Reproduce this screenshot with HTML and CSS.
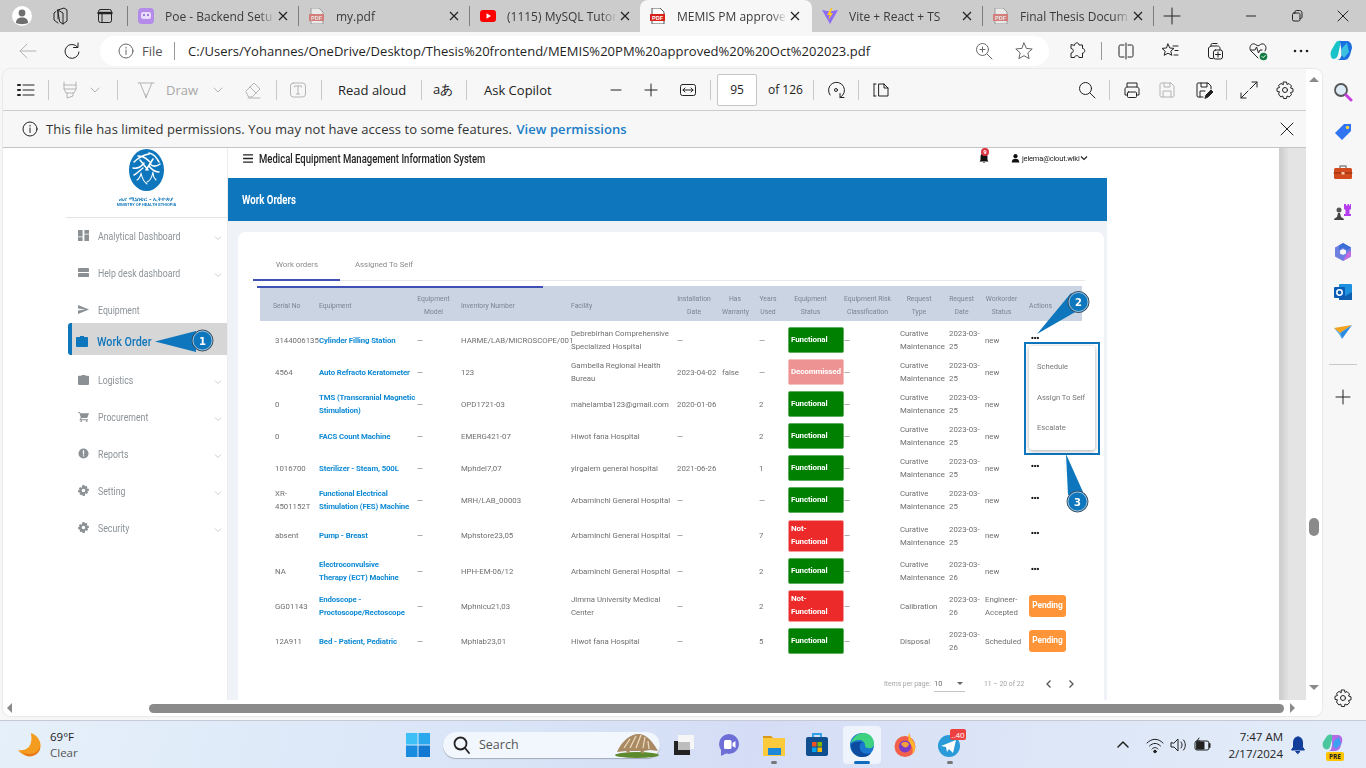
FILE: index.html
```html
<!DOCTYPE html>
<html lang="en">
<head>
<meta charset="utf-8">
<title>MEMIS PM approved</title>
<link rel="stylesheet" href="styles.css">
</head>
<body>
<div class="app">

<div class="tabbar">
  <svg class="i m12" viewBox="0 0 20 20"><circle cx="10" cy="10" r="10" fill="#fff" stroke="none"/><circle cx="10" cy="7" r="3.4" fill="#6f6f6f" stroke="none"/><path d="M4 17c0-4 2.500-5.500 6-5.500s6 1.500 6 5.500c-3 1.500-9 1.500-12 0z" fill="#6f6f6f" stroke="none"/></svg>
  <svg class="i m19" viewBox="0 0 20 20"><path d="M7 4l6-2 3 2v11l-4 3-3-2zM7 4l5 3v11M5 5.500L3 7v7l4 3M7 4v9"/></svg>
  <svg class="i m24" viewBox="0 0 20 20"><rect x="3.500" y="3.500" width="13" height="13" rx="2"/><path d="M3.500 7h13" stroke-width="2.400"/><path d="M7 7v9.500"/></svg>
  <span class="tsep m12"></span>
  <div class="tab"><svg class="fav" viewBox="0 0 16 16"><rect width="16" height="16" rx="4" fill="#b48be8"/><rect x="3" y="4" width="10" height="7" rx="2" fill="#e9dcff"/><path d="M5 7h2M9 7h2" stroke="#8a5fd0" stroke-width="1.500"/></svg><span class="tname">Poe - Backend Setu</span><svg class="x" viewBox="0 0 12 12"><path d="M2 2l8 8M10 2l-8 8"/></svg></div>
  <span class="tsep"></span>
  <div class="tab"><svg class="fav dim" viewBox="0 0 16 16"><path d="M2 0h8l4 4v12H2z" fill="#fff" stroke="#777"/><rect y="6" width="15" height="7" fill="#d9403a"/><text x="7.500" y="12" class="pdftxt">PDF</text></svg><span class="tname">my.pdf</span><svg class="x" viewBox="0 0 12 12"><path d="M2 2l8 8M10 2l-8 8"/></svg></div>
  <span class="tsep"></span>
  <div class="tab"><svg class="fav" viewBox="0 0 16 16"><rect y="2" width="16" height="12" rx="3" fill="#f00"/><path d="M6.500 5.200L11 8l-4.500 2.800z" fill="#fff"/></svg><span class="tname">(1115) MySQL Tutor</span><svg class="x" viewBox="0 0 12 12"><path d="M2 2l8 8M10 2l-8 8"/></svg></div>
  <div class="tab on"><svg class="fav" viewBox="0 0 16 16"><path d="M2 0h8l4 4v12H2z" fill="#fff" stroke="#555"/><rect y="6" width="15" height="7" fill="#d9211b"/><text x="7.500" y="12" class="pdftxt">PDF</text></svg><span class="tname">MEMIS PM approve</span><svg class="x" viewBox="0 0 12 12"><path d="M2 2l8 8M10 2l-8 8"/></svg></div>
  <div class="tab"><svg class="fav" viewBox="0 0 16 16"><path d="M0 2l8 1.500L16 2 8 16z" fill="#8d6cf5"/><path d="M9 0L5 7h2.500L6.500 12 11 5H8.500L10.500 0z" fill="#ffc91f"/></svg><span class="tname">Vite + React + TS</span><svg class="x" viewBox="0 0 12 12"><path d="M2 2l8 8M10 2l-8 8"/></svg></div>
  <span class="tsep"></span>
  <div class="tab"><svg class="fav dim" viewBox="0 0 16 16"><path d="M2 0h8l4 4v12H2z" fill="#fff" stroke="#777"/><rect y="6" width="15" height="7" fill="#d9403a"/><text x="7.500" y="12" class="pdftxt">PDF</text></svg><span class="tname">Final Thesis Docum</span><svg class="x" viewBox="0 0 12 12"><path d="M2 2l8 8M10 2l-8 8"/></svg></div>
  <span class="tsep"></span>
  <svg class="i m8" viewBox="0 0 20 20"><path d="M10 2v16M2 10h16"/></svg>
  <div class="winctl">
    <span class="wbtn"><svg class="i" viewBox="0 0 20 20"><path d="M5.500 10h9"/></svg></span>
    <span class="wbtn"><svg class="i" viewBox="0 0 20 20"><rect x="5.500" y="7" width="7.500" height="8" rx="1.500"/><path d="M8 7V6c0-1 .5-1.500 1.500-1.500h3c1.500 0 2.500 1 2.500 2.500v4c0 1-.5 1.500-2 1.500"/></svg></span>
    <span class="wbtn"><svg class="i" viewBox="0 0 20 20"><path d="M5 5l10 10M15 5L5 15"/></svg></span>
  </div>
</div>

<div class="addr">
  <svg class="i m18 off" viewBox="0 0 20 20"><path d="M18 10H2M9 3l-7 7 7 7"/></svg>
  <svg class="i m24" viewBox="0 0 20 20"><path d="M15.500 6A7 7 0 1 0 17 11M16 2v4.500h-4.500"/></svg>
  <div class="pill m18">
    <svg class="i16 m18 gray" viewBox="0 0 16 16"><circle cx="8" cy="8" r="7"/><path d="M8 7v4.500M8 4.300v.8"/></svg>
    <span class="file m8">File</span>
    <span class="psep m12"></span>
    <span class="url m13">C:/Users/Yohannes/OneDrive/Desktop/Thesis%20frontend/MEMIS%20PM%20approved%20%20Oct%202023.pdf</span>
    <div class="pillend">
      <svg class="i gray" viewBox="0 0 20 20"><circle cx="8.500" cy="8.500" r="6"/><path d="M13 13l5 5M8.500 6v5M6 8.500h5"/></svg>
      <svg class="i gray" viewBox="0 0 20 20"><path d="M10 2l2.400 5.400 5.800.6-4.400 3.900 1.300 5.700L10 14.700l-5.100 2.900 1.300-5.700L1.800 8l5.800-.6z"/></svg>
    </div>
  </div>
  <svg class="i m18" viewBox="0 0 20 20"><path d="M7.500 4c0-3 4.500-3 4.500 0h3.500v3.500c3 0 3 4.500 0 4.500v4.500H12c0-2.500-4.500-2.500-4.500 0H4V12c3 0 3-4.500 0-4.500V4z"/></svg>
  <span class="psep m14"></span>
  <svg class="i m14" viewBox="0 0 20 20"><path d="M10 2v16M8 4H4.500C3.500 4 3 4.500 3 5.500v9c0 1 .5 1.500 1.500 1.500H8M12 4h3.500c1 0 1.500.5 1.500 1.500v9c0 1-.5 1.500-1.500 1.500H12"/></svg>
  <svg class="i m24" viewBox="0 0 20 20"><path d="M8 3l1.800 4 4.200.4-3.200 2.800 1 4.100L8 12.200l-3.800 2.100 1-4.100L2 7.400 6.200 7zM13 5h5M15 9.500h3M14 14h4"/></svg>
  <svg class="i m25" viewBox="0 0 20 20"><path d="M6 5V4c0-1 .5-1.500 1.500-1.500H12M4 6.500l2-1.500h6.500C14 5 15 6 15 7.500V9M3.500 7v8c0 1.500 1 2.500 2.500 2.500h2"/><rect x="8.500" y="9" width="9" height="9" rx="2"/><path d="M13 11v5M10.500 13.500h5"/></svg>
  <svg class="i m23" viewBox="0 0 20 20"><path d="M10 17L3 10C0 6 4 1 7.500 3.500L10 5l2.500-1.500C16 1 20 6 17 10M3 9h4l1.500-3 2 6 1.500-3h2"/><circle cx="15.500" cy="15.500" r="3.800" fill="#107c41" stroke="none"/><path d="M14 15.500l1.200 1.200 2-2.200" stroke="#fff"/></svg>
  <svg class="i m23" viewBox="0 0 20 20"><circle cx="4" cy="10" r="1.300" fill="#222" stroke="none"/><circle cx="10" cy="10" r="1.300" fill="#222" stroke="none"/><circle cx="16" cy="10" r="1.300" fill="#222" stroke="none"/></svg>
  <svg class="i24 m19" viewBox="0 0 24 24"><path d="M5 5c1-3 4-4 6-3l-3 14c-1 3-3 4-5 4-2-1-3-4-2-8z" fill="#17c3c9"/><path d="M10 2h7c3 0 5 3 5 7l-2 7c-1 3-3 5-6 5H7c3 0 4-3 5-6z" fill="#1a6fe0"/><path d="M12 9l5-5 2 9-5 6-3-4z" fill="#3bc2e0"/></svg>
</div>

<div class="body">
  <div class="viewer">
    <div class="docpane">
      <div class="pdfbar">
        <svg class="i m13" viewBox="0 0 20 20"><path d="M7 5h11M7 10h11M7 15h11"/><path d="M2 5h2M2 10h2M2 15h2" stroke-width="2"/></svg>
        <span class="bsep m12"></span>
        <svg class="i m11 off" viewBox="0 0 20 20"><path d="M4 2v7h12V2M4 9l2 4h8l2-4M7 13v5l6-2v-3M4 5h12"/></svg>
        <svg class="i16 m7 off" viewBox="0 0 16 16"><path d="M4 6l4 4 4-4"/></svg>
        <span class="bsep m14"></span>
        <svg class="i m18 off" viewBox="0 0 20 20"><path d="M2 3h16M4 3l5 12h2l5-12M9 15l1 3 1-3"/></svg>
        <span class="lbl off w32 m10">Draw</span>
        <svg class="i16 m12 off" viewBox="0 0 16 16"><path d="M4 6l4 4 4-4"/></svg>
        <svg class="i m17 off" viewBox="0 0 20 20"><path d="M3 11l8-8 6 6-8 8H6zM7 7l6 6M5 18h12"/></svg>
        <span class="bsep m13"></span>
        <svg class="i m11 off" viewBox="0 0 20 20"><rect x="2.500" y="3" width="15" height="14" rx="3"/><path d="M6.500 7V6h7v1M10 6v8M8.500 14h3"/></svg>
        <span class="bsep m13"></span>
        <span class="lbl w69 m16">Read aloud</span>
        <span class="bsep m14"></span>
        <span class="lbl w20 m11">aあ</span>
        <span class="bsep m13"></span>
        <span class="lbl w70 m17">Ask Copilot</span>
        <svg class="i m52" viewBox="0 0 20 20"><path d="M5 10h10"/></svg>
        <svg class="i m15" viewBox="0 0 20 20"><path d="M10 4v12M4 10h12"/></svg>
        <svg class="i m17" viewBox="0 0 20 20"><rect x="2.500" y="4.500" width="15" height="11" rx="2"/><path d="M5 10h10M7 8l-2 2 2 2M13 8l2 2-2 2"/></svg>
        <span class="bsep m12"></span>
        <span class="pagebox m6">95</span>
        <span class="lbl small w34 m11">of 126</span>
        <span class="bsep m11"></span>
        <svg class="i m12" viewBox="0 0 20 20"><path d="M4 15A8 8 0 1 1 14 17.500M14 13.500v4h4"/><circle cx="10" cy="10" r="1.500"/></svg>
        <span class="bsep m12"></span>
        <svg class="i m12" viewBox="0 0 20 20"><path d="M8 4h5l4 4v8H8zM13 4v4h4M3 4h2M3 16h2M3 4v12" /></svg>
        <svg class="i pushr" viewBox="0 0 20 20"><circle cx="8.500" cy="8.500" r="6"/><path d="M13 13l5 5"/></svg>
        <span class="bsep m12"></span>
        <svg class="i m12" viewBox="0 0 20 20"><path d="M5 7V3h10v4M5 15H3V9c0-1 1-2 2-2h10c1 0 2 1 2 2v6h-2"/><rect x="5.500" y="12" width="9" height="5.500" rx="1"/></svg>
        <svg class="i m15 off" viewBox="0 0 20 20"><path d="M3 4c0-.5.5-1 1-1h10l3 3v10c0 .5-.5 1-1 1H4c-.5 0-1-.5-1-1zM7 3v4h6V3M6 17v-6h8v6"/></svg>
        <svg class="i m17" viewBox="0 0 20 20"><path d="M9 17H4c-.5 0-1-.5-1-1V4c0-.5.5-1 1-1h10l3 3v3M7 3v4h6V3M6 17v-6h5"/><path d="M11 18l1-3 5-5 2 2-5 5z" fill="#222"/></svg>
        <span class="bsep m12"></span>
        <svg class="i m12" viewBox="0 0 20 20"><path d="M11 9l7-7M13 2h5v5M9 11l-7 7M2 13v5h5"/></svg>
        <svg class="i m16" viewBox="0 0 20 20"><circle cx="10" cy="10" r="2.500"/><path d="M8.500 2h3l.5 2.500 2-1 2.500 2.500-1 2 2.500.8v3l-2.500.7 1 2.200-2.500 2.300-2-1-.5 2.500h-3l-.7-2.500-2 1L3.500 14l1-2.200L2 11.300v-3l2.500-.8-1-2L6 3.500l2 1z"/></svg>
      </div>
      <div class="infobar">
        <svg class="i16 m19" viewBox="0 0 16 16"><circle cx="8" cy="8" r="7"/><path d="M8 7v4.500M8 4.300v.8"/></svg>
        <span class="infotxt m8">This file has limited permissions. You may not have access to some features. <b>View permissions</b></span>
        <svg class="i pushr m-x" viewBox="0 0 20 20"><path d="M4 4l12 12M16 4L4 16"/></svg>
      </div>
      <div class="content">
        <div class="page">
          <aside class="side">
            <div class="logo">
              <svg class="logomark" viewBox="0 0 35 42"><ellipse cx="17.500" cy="21" rx="17.500" ry="21" fill="#0e76bc"/><path d="M5 13c5-5 9-7 15-8M9 7c6 0 9 3 13 7M20 4c5 1 7 4 10 9M4 19c5 1 8-1 11-5M31 15c-4 3-7 3-10 0M11 11l8 10M24 10l-7 11M5 26c4-2 6-5 9-7M30 23c-3 0-7-2-10-6" fill="none" stroke="#fff" stroke-width="1.500" stroke-linecap="round"/><path d="M12 24c1 5 3 9 6 11M24 23c-1 5-3 9-6 10M8 31c2-1 3-3 4-6M27 31c-1-1-3-3-3-7" fill="none" stroke="#fff" stroke-width="1.100" stroke-linecap="round"/></svg>
              <div class="logotxt"><span class="amh">ጤና ሚኒስቴር - ኢትዮጵያ</span><span class="moh">MINISTRY OF HEALTH ETHIOPIA</span></div>
            </div>
            <nav class="nav">
              <a class="nv"><svg class="ni" viewBox="0 0 12 12"><path d="M0 0h5v7H0zM7 0h5v4H7zM0 8h5v4H0zM7 5h5v7H7z"/></svg><span class="nt">Analytical Dashboard</span><svg class="cv" viewBox="0 0 8 8"><path d="M1 2.500l3 3 3-3"/></svg></a>
              <a class="nv"><svg class="ni" viewBox="0 0 12 12"><rect y="1" width="12" height="4.500" rx="1"/><rect y="6.500" width="12" height="4.500" rx="1"/></svg><span class="nt">Help desk dashboard</span><svg class="cv" viewBox="0 0 8 8"><path d="M1 2.500l3 3 3-3"/></svg></a>
              <a class="nv"><svg class="ni" viewBox="0 0 12 12"><path d="M0 1l12 5-12 5V7l8-1-8-1z"/></svg><span class="nt">Equipment</span></a>
              <a class="nv active"><svg class="ni" viewBox="0 0 12 12"><path d="M4 2V1h4v1h3c.5 0 1 .5 1 1v8c0 .5-.5 1-1 1H1c-.5 0-1-.5-1-1V3c0-.5.5-1 1-1z"/></svg><span class="nt">Work Order</span></a>
              <a class="nv"><svg class="ni" viewBox="0 0 12 12"><path d="M4 2V1h4v1h3c.5 0 1 .5 1 1v8c0 .5-.5 1-1 1H1c-.5 0-1-.5-1-1V3c0-.5.5-1 1-1z"/></svg><span class="nt">Logistics</span><svg class="cv" viewBox="0 0 8 8"><path d="M1 2.500l3 3 3-3"/></svg></a>
              <a class="nv"><svg class="ni" viewBox="0 0 12 12"><path d="M0 1h2l.6 1.500H12L10 7.500H4L3 9h8v1H1.500L3 7 1.500 2H0z"/><circle cx="3.500" cy="11" r="1"/><circle cx="9.500" cy="11" r="1"/></svg><span class="nt">Procurement</span><svg class="cv" viewBox="0 0 8 8"><path d="M1 2.500l3 3 3-3"/></svg></a>
              <a class="nv"><svg class="ni" viewBox="0 0 12 12"><circle cx="6" cy="6" r="5.500"/><path d="M5.300 2.500h1.400v4.500H5.300zM5.300 8h1.400v1.400H5.300z" fill="#fff"/></svg><span class="nt">Reports</span><svg class="cv" viewBox="0 0 8 8"><path d="M1 2.500l3 3 3-3"/></svg></a>
              <a class="nv"><svg class="ni" viewBox="0 0 12 12"><path d="M5 0h2l.3 1.700 1.500-.9 1.500 1.400-1 1.500L11.800 4v2.500l-1.700.4.9 1.500-1.500 1.400-1.400-1L7.200 12H5l-.4-1.700-1.500 1-1.400-1.500.9-1.400L.2 7.800V5.500l1.700-.3-1-1.500L2.300 2.300l1.500.9zM6 4a2 2 0 1 0 0 4 2 2 0 0 0 0-4z" fill-rule="evenodd"/></svg><span class="nt">Setting</span><svg class="cv" viewBox="0 0 8 8"><path d="M1 2.500l3 3 3-3"/></svg></a>
              <a class="nv"><svg class="ni" viewBox="0 0 12 12"><path d="M5 0h2l.3 1.700 1.500-.9 1.500 1.400-1 1.500L11.800 4v2.500l-1.700.4.9 1.500-1.500 1.400-1.400-1L7.200 12H5l-.4-1.700-1.500 1-1.400-1.500.9-1.400L.2 7.800V5.500l1.700-.3-1-1.500L2.300 2.300l1.500.9zM6 4a2 2 0 1 0 0 4 2 2 0 0 0 0-4z" fill-rule="evenodd"/></svg><span class="nt">Security</span><svg class="cv" viewBox="0 0 8 8"><path d="M1 2.500l3 3 3-3"/></svg></a>
            </nav>
          </aside>
          <main class="main">
            <header class="top">
              <svg class="burger" viewBox="0 0 12 10"><path d="M0 1h11M0 5h11M0 9h11"/></svg>
              <span class="sys">Medical Equipment Management Information System</span>
              <div class="topright">
                <span class="bell"><svg class="bellsvg" viewBox="0 0 12 12"><path d="M6 1c-2.500 0-3.500 2-3.500 4v3L1.500 9.500h9L9.500 8V5C9.500 3 8.500 1 6 1zM5 10.500h2v.5H5z"/></svg><span class="belln">9</span></span>
                <svg class="usr" viewBox="0 0 12 12"><circle cx="6" cy="3.500" r="2.800"/><path d="M1 12c0-4 2-5 5-5s5 1 5 5z"/></svg>
                <span class="mail">jelema@clout.wiki</span>
                <svg class="ucv" viewBox="0 0 8 8"><path d="M1 2.500l3 3 3-3"/></svg>
              </div>
            </header>
            <div class="band"><span class="bandt">Work Orders</span></div>
            <div class="area">
              <section class="card">
                <div class="tabs"><span class="ct act">Work orders</span><span class="ct">Assigned To Self</span></div>
                <div class="tw">
                  <span class="prog"></span>
                  <table class="tbl">
                    <colgroup><col class="c1"><col class="c2"><col class="c3"><col class="c4"><col class="c5"><col class="c6"><col class="c7"><col class="c8"><col class="c9"><col class="c10"><col class="c11"><col class="c12"><col class="c13"><col class="c14"></colgroup>
                    <thead><tr>
                      <th class="l f">Serial No</th><th class="l">Equipment</th><th>Equipment Model</th><th class="l">Inventory Number</th><th class="l">Facility</th><th>Installation Date</th><th>Has Warranty</th><th>Years Used</th><th>Equipment Status</th><th class="wide">Equipment Risk<br>Classification</th><th>Request Type</th><th>Request Date</th><th>Workorder Status</th><th class="l">Actions</th>
                    </tr></thead>
                    <tbody>
                      <tr class="first"><td class="f">3144006135</td><td class="eq">Cylinder Filling Station</td><td>—</td><td>HARME/LAB/MICROSCOPE/001</td><td>Debrebirhan Comprehensive Specialized Hospital</td><td>—</td><td></td><td>—</td><td><span class="st ok">Functional</span></td><td>—</td><td>Curative Maintenance</td><td>2023-03-25</td><td>new</td><td><span class="dots">•••</span></td></tr>
                      <tr><td class="f">4564</td><td class="eq">Auto Refracto Keratometer</td><td>—</td><td>123</td><td>Gambella Regional Health Bureau</td><td>2023-04-02</td><td>false</td><td>—</td><td><span class="st dec">Decommissed</span></td><td>—</td><td>Curative Maintenance</td><td>2023-03-25</td><td>new</td><td></td></tr>
                      <tr><td class="f">0</td><td class="eq">TMS (Transcranial Magnetic Stimulation)</td><td>—</td><td>OPD1721-03</td><td>mahelamba123@gmail.com</td><td>2020-01-06</td><td></td><td>2</td><td><span class="st ok">Functional</span></td><td>—</td><td>Curative Maintenance</td><td>2023-03-25</td><td>new</td><td></td></tr>
                      <tr><td class="f">0</td><td class="eq">FACS Count Machine</td><td>—</td><td>EMERG421-07</td><td>Hiwot fana Hospital</td><td>—</td><td></td><td>2</td><td><span class="st ok">Functional</span></td><td>—</td><td>Curative Maintenance</td><td>2023-03-25</td><td>new</td><td></td></tr>
                      <tr><td class="f">1016700</td><td class="eq">Sterilizer - Steam, 500L</td><td>—</td><td>Mphdel7,07</td><td>yirgalem general hospital</td><td>2021-06-26</td><td></td><td>1</td><td><span class="st ok">Functional</span></td><td>—</td><td>Curative Maintenance</td><td>2023-03-25</td><td>new</td><td><span class="dots">•••</span></td></tr>
                      <tr><td class="f">XR-4501152T</td><td class="eq">Functional Electrical Stimulation (FES) Machine</td><td>—</td><td>MRH/LAB_00003</td><td>Arbaminchi General Hospital</td><td>—</td><td></td><td>—</td><td><span class="st ok">Functional</span></td><td>—</td><td>Curative Maintenance</td><td>2023-03-25</td><td>new</td><td><span class="dots">•••</span></td></tr>
                      <tr class="tall"><td class="f">absent</td><td class="eq">Pump - Breast</td><td>—</td><td>Mphstore23,05</td><td>Arbaminchi General Hospital</td><td>—</td><td></td><td>7</td><td><span class="st bad">Not-Functional</span></td><td>—</td><td>Curative Maintenance</td><td>2023-03-25</td><td>new</td><td><span class="dots">•••</span></td></tr>
                      <tr><td class="f">NA</td><td class="eq">Electroconvulsive<br>Therapy (ECT) Machine</td><td>—</td><td>HPH-EM-06/12</td><td>Arbaminchi General Hospital</td><td>—</td><td></td><td>2</td><td><span class="st ok">Functional</span></td><td>—</td><td>Curative Maintenance</td><td>2023-03-26</td><td>new</td><td><span class="dots">•••</span></td></tr>
                      <tr class="tall2"><td class="f">GG01143</td><td class="eq">Endoscope - Proctoscope/Rectoscope</td><td>—</td><td>Mphnicu21,03</td><td>Jimma University Medical Center</td><td>—</td><td></td><td>2</td><td><span class="st bad">Not-Functional</span></td><td>—</td><td>Calibration</td><td>2023-03-26</td><td>Engineer-Accepted</td><td><span class="pend">Pending</span></td></tr>
                      <tr><td class="f">12A911</td><td class="eq">Bed - Patient, Pediatric</td><td>—</td><td>Mphlab23,01</td><td>Hiwot fana Hospital</td><td>—</td><td></td><td>5</td><td><span class="st ok">Functional</span></td><td>—</td><td>Disposal</td><td>2023-03-26</td><td>Scheduled</td><td><span class="pend">Pending</span></td></tr>
                    </tbody>
                  </table>
                </div>
                <div class="pager">
                  <span class="pl">Items per page:</span>
                  <span class="psel"><span>10</span><i class="caret"></i></span>
                  <span class="pr">11 – 20 of 22</span>
                  <svg class="pg" viewBox="0 0 10 10"><path d="M6.500 1.500L3 5l3.500 3.500"/></svg>
                  <svg class="pg nx" viewBox="0 0 10 10"><path d="M3.500 1.500L7 5 3.500 8.500"/></svg>
                </div>
              </section>
            </div>
          </main>
          <svg class="marks" viewBox="3 148 1276 552">
            <path d="M155 341.500L196 331v21z" fill="#0e76bc"/>
            <circle cx="202.500" cy="340.500" r="10.500" fill="#0e76bc" stroke="#3d4a55"/>
            <circle cx="202.500" cy="340.500" r="9.500" fill="none" stroke="#bcd6e8" stroke-width=".8"/>
            <text x="202.500" y="344.500" class="num">1</text>
            <path d="M1037 334L1071 293l13 14z" fill="#0e76bc"/>
            <circle cx="1078.500" cy="302" r="10.500" fill="#0e76bc" stroke="#3d4a55"/>
            <circle cx="1078.500" cy="302" r="9.500" fill="none" stroke="#bcd6e8" stroke-width=".8"/>
            <text x="1078.500" y="306" class="num">2</text>
            <path d="M1066 454L1068 495l15-3z" fill="#0e76bc"/>
            <circle cx="1077.500" cy="501.500" r="10.500" fill="#0e76bc" stroke="#3d4a55"/>
            <circle cx="1077.500" cy="501.500" r="9.500" fill="none" stroke="#bcd6e8" stroke-width=".8"/>
            <text x="1077.500" y="505.500" class="num">3</text>
          </svg>
          <div class="menubox"><div class="menu"><span>Schedule</span><span>Assign To Self</span><span>Escalate</span></div></div>
        </div>
      </div>
      <div class="hscroll">
        <i class="arr al"></i>
        <span class="hthumb"></span>
        <i class="arr ar"></i>
      </div>
    </div>
    <div class="vscroll"><i class="arr au"></i><span class="vthumb"></span><i class="arr ad"></i></div>
  </div>
  <aside class="rail">
    <svg class="i" viewBox="0 0 20 20"><circle cx="8" cy="8" r="6" fill="#dbeaf5" stroke="#555" stroke-width="1.800"/><path d="M13 13l5 5" stroke="#c73fe0" stroke-width="3"/></svg>
    <svg class="i" viewBox="0 0 20 20"><path d="M11 2h7v7l-9 9-7-7z" fill="#2f74f0" stroke="none"/><circle cx="14.500" cy="5.500" r="1.700" fill="#ffd23f" stroke="none"/></svg>
    <svg class="i" viewBox="0 0 20 20"><path d="M7 6V4h6v2" stroke="#888" stroke-width="1.500"/><rect x="1" y="6" width="18" height="11" rx="1.500" fill="#d24a1d" stroke="none"/><path d="M1 11h18" stroke="#8c2d0e" stroke-width="1"/><rect x="8.500" y="10" width="3" height="2.500" fill="#f3c9a8" stroke="none"/></svg>
    <svg class="i" viewBox="0 0 20 20"><circle cx="6" cy="8" r="2.500" fill="#555" stroke="none"/><path d="M1 18c0-2 2-2 3-3l1-4h2l1 4c1 1 3 1 3 3z" fill="#444" stroke="none"/><path d="M11 2h2v1.500h1.500V2h1.500v1.500h1V2h1v5l-1.500 1v4H18v2h-7v-2h1.500V8L11 7z" fill="#b53df0" stroke="none"/></svg>
    <svg class="i" viewBox="0 0 20 20"><path d="M10 1l8 4.500v9L10 19l-8-4.500v-9z" fill="#6d7fe0" stroke="none"/><path d="M10 1l8 4.500-4 2.500-4-2.500L6 8V3.500z" fill="#3a6fd8" stroke="none"/><path d="M10 19l8-4.500v-6l-4 2.500z" fill="#c46be0" stroke="none"/><path d="M7 8.500l3-1.500 3 1.500v3l-3 1.500-3-1.500z" fill="#f7f7f7" stroke="none"/></svg>
    <svg class="i" viewBox="0 0 20 20"><rect x="6" y="2" width="13" height="16" rx="1" fill="#1e90e0" stroke="none"/><path d="M6 10l6.500 4L19 10v8H6z" fill="#0f5fb0" stroke="none"/><rect x="1" y="5" width="11" height="11" rx="1" fill="#0a5cb8" stroke="none"/><circle cx="6.500" cy="10.500" r="2.700" fill="none" stroke="#fff" stroke-width="1.500"/></svg>
    <svg class="i" viewBox="0 0 20 20"><path d="M1 6l18-3-12 8z" fill="#f3a21d" stroke="none"/><path d="M19 3L7 11l2 6z" fill="#2a8ae0" stroke="none"/><path d="M1 6l6 5 2 6-3-5z" fill="#49a8ee" stroke="none"/></svg>
    <span class="railsep"></span>
    <svg class="i" viewBox="0 0 20 20"><path d="M10 3v14M3 10h14"/></svg>
    <svg class="i railgear" viewBox="0 0 20 20"><circle cx="10" cy="10" r="2.500"/><path d="M8.500 2h3l.5 2.500 2-1 2.500 2.500-1 2 2.500.8v3l-2.500.7 1 2.200-2.500 2.300-2-1-.5 2.500h-3l-.7-2.500-2 1L3.500 14l1-2.200L2 11.300v-3l2.500-.8-1-2L6 3.500l2 1z"/></svg>
  </aside>
</div>

<footer class="taskbar">
  <svg class="i24 m18" viewBox="0 0 24 24"><path d="M13 0C21 3 24 11 22 16c-2 6-8 8-13 7-4-1-7-3-9-6 7 1 12-2 13-8 1-4 0-7 0-9z" fill="#f39c1f"/><path d="M22 13c-1 5-5 8-10 8-3 0-6-1-8-2 2 2 3 3 5 4 5 1 11-1 13-7z" fill="#e8791a"/></svg>
  <div class="wx m8"><span>69°F</span><span class="wxs">Clear</span></div>
  <svg class="i24 m316" viewBox="0 0 24 24"><path d="M0 0h11.500v11.500H0z" fill="#3cc0f5"/><path d="M12.500 0H24v11.500H12.500z" fill="#29a8ee"/><path d="M0 12.500h11.500V24H0z" fill="#1a8ce0"/><path d="M12.500 12.500H24V24H12.500z" fill="#1278d2"/></svg>
  <div class="tsearch m13">
    <svg class="i" viewBox="0 0 20 20"><circle cx="8.500" cy="8.500" r="6" stroke-width="1.800"/><path d="M13 13l4 5" stroke-width="1.800"/></svg>
    <span class="st-l">Search</span>
    <svg class="pang" viewBox="0 0 46 26"><ellipse cx="23" cy="23" rx="22" ry="3" fill="#5d8a2e" /><path d="M3 20C8 8 18 1 26 2c7 1 13 8 18 17l-8-1-6 1-1 3-3-3H16l-2 3-2-3z" fill="#a98a63"/><path d="M10 16l6-9M16 16l6-12M22 16l5-13M29 16l2-11M35 17l-1-8" stroke="#ead9bd" stroke-width="1.300"/></svg>
  </div>
  <span class="tk m4"><svg class="i24" viewBox="0 0 24 24"><rect x="3" y="8" width="16" height="14" fill="#222"/><rect x="7" y="2" width="16" height="14" fill="#f6f6f6"/><rect x="7" y="9" width="12" height="8" fill="#bdbdbd"/></svg></span>
  <span class="tk m8"><svg class="i24" viewBox="0 0 24 24"><circle cx="12" cy="11" r="10" fill="#6e6fd6"/><path d="M4 16v7l6-3z" fill="#6e6fd6"/><rect x="7" y="7" width="7.500" height="9" rx="1.500" fill="#fff"/><path d="M15.500 10l3-2v7l-3-2z" fill="#fff"/></svg></span>
  <span class="tk m7 pip"><svg class="i24" viewBox="0 0 24 24"><path d="M1 3h8l2 2h12v18H1z" fill="#fbc93c"/><path d="M1 3h8l2 2H1z" fill="#d9981a"/><rect x="6" y="15" width="13" height="7" fill="#1e88d8"/></svg></span>
  <span class="tk m5"><svg class="i24" viewBox="0 0 24 24"><path d="M8 5V1h8v4" fill="none" stroke="#2c9fe8" stroke-width="1.800"/><rect x="1" y="4" width="22" height="19" rx="2" fill="#0f4e8f"/><path d="M7 9h4.500v4.500H7z" fill="#f25022"/><path d="M12.500 9H17v4.500h-4.500z" fill="#7fba00"/><path d="M7 14.500h4.500V19H7z" fill="#00a4ef"/><path d="M12.500 14.500H17V19h-4.500z" fill="#ffb900"/></svg></span>
  <span class="tk m7 sel"><svg class="i24" viewBox="0 0 24 24"><circle cx="12" cy="12" r="12" fill="#1b78d0"/><path d="M1 10C3 3 9 0 14 0c6 0 10 5 10 11 0 3-3 5-6 4-2 0-3-1-3-3 0-3-3-5-6-5-4 0-7 2-8 3z" fill="#3ed17f"/><path d="M1 12c0 7 5 12 11 12 3 0 7-1 9-4-5 2-10 0-11-4-1-3 0-6 3-7-6-1-11 0-12 3z" fill="#0c4b9e"/></svg></span>
  <span class="tk m5"><svg class="i24" viewBox="0 0 24 24"><circle cx="12" cy="13.500" r="10.500" fill="#f2604a"/><path d="M16 0c2 3 1 5 4 8 3 4 3 10-1 13 2-5 0-9-3-11-1-4-1-7 0-10z" fill="#ffb52e"/><circle cx="12" cy="13.500" r="6" fill="#7b3bc7"/><path d="M8 11c2-3 6-3 8 0-1 4-5 5-8 0z" fill="#f2a03d"/></svg></span>
  <span class="tk m7 pip"><svg class="i24" viewBox="0 0 24 24"><circle cx="11" cy="13" r="11" fill="#2a9bd8"/><path d="M3 13l15-6-3 13-4-4-2 3-1-5z" fill="#fff"/></svg><span class="cnt">..40</span></span>
  <svg class="i16 m146" viewBox="0 0 16 16"><path d="M3 10l5-5 5 5" stroke-width="1.500"/></svg>
  <svg class="i m14" viewBox="0 0 20 20"><path d="M2 8c5-5 11-5 16 0M4.500 11c3.500-3.500 7.500-3.500 11 0M7 14c2-2 4-2 6 0"/><circle cx="10" cy="16.500" r="1.300" fill="#222"/></svg>
  <svg class="i m4" viewBox="0 0 20 20"><path d="M2 8v4h3l4 4V4L5 8zM12 7c1.500 2 1.500 4 0 6M14.500 5c2.500 3 2.500 7 0 10"/></svg>
  <svg class="i m4" viewBox="0 0 20 20"><rect x="2" y="6" width="14" height="9" rx="2"/><path d="M16.500 9v3" stroke-width="2"/><path d="M4 7h7v7H4z" fill="#222"/><path d="M6 3L4 6h3L6 9" /></svg>
  <div class="clock m4"><span>7:47 AM</span><span>2/17/2024</span></div>
  <svg class="i m5" viewBox="0 0 20 20"><path d="M10 2C6.500 2 5.500 5 5.500 8v4L3.500 15h13l-2-3V8C14.500 5 13.500 2 10 2zM8 16.500h4L10 18.500z" fill="#0f3d99" stroke="#0f3d99"/></svg>
  <span class="cop m13"><svg class="i24" viewBox="0 0 24 24"><path d="M6 3c2-2 5-2 6 0l-3 11c-1 2-3 3-5 2S1 12 2 9z" fill="#4bc7a0"/><path d="M11 2h6c3 0 5 3 4 7l-2 6c-1 2-3 3-5 3H7c3 0 3-2 4-5z" fill="#b06be8"/><path d="M13 8l5-4 2 7-5 5-3-3z" fill="#3aa0f0"/></svg><span class="pre">PRE</span></span>
</footer>

</div>
</body>
</html>
```

FILE: styles.css
```css
* { box-sizing: border-box; }
html, body { margin: 0; padding: 0; width: 1366px; height: 768px; overflow: hidden; }
body { font-family: "Open Sans", "Noto Sans", sans-serif; color: #222; background: #f7f7f7; }
.app { width: 1366px; height: 768px; display: flex; flex-direction: column; }

.i { width: 20px; height: 20px; flex: none; fill: none; stroke: #222; stroke-width: 1; stroke-linecap: round; stroke-linejoin: round; }
.i16 { width: 16px; height: 16px; flex: none; fill: none; stroke: #222; stroke-width: 1; stroke-linecap: round; stroke-linejoin: round; }
.i24 { width: 24px; height: 24px; flex: none; }
.off { stroke: #b4b4b4; color: #a8a8a8; }
.gray { stroke: #666; }

.m4 { margin-left: 4px; } .m5 { margin-left: 5px; } .m6 { margin-left: 6px; } .m7 { margin-left: 7px; } .m8 { margin-left: 8px; }
.m10 { margin-left: 10px; } .m11 { margin-left: 11px; } .m12 { margin-left: 12px; } .m13 { margin-left: 13px; } .m14 { margin-left: 14px; }
.m15 { margin-left: 15px; } .m16 { margin-left: 16px; } .m17 { margin-left: 17px; } .m18 { margin-left: 18px; } .m19 { margin-left: 19px; }
.m23 { margin-left: 23px; } .m24 { margin-left: 24px; } .m25 { margin-left: 25px; } .m52 { margin-left: 52px; } .m146 { margin-left: 146px; } .m316 { margin-left: 316px; }

/* tabs */
.tabbar { height: 32px; background: #ccc; display: flex; align-items: center; flex: none; }
.tsep { width: 1px; height: 20px; background: #7d7d7d; flex: none; }
.tab { width: 170px; height: 32px; display: flex; align-items: center; padding-left: 10px; flex: none; }
.tab.on { width: 172px; background: #f7f7f7; border-radius: 8px 8px 0 0; padding-left: 10px; }
.fav { width: 16px; height: 16px; flex: none; }
.fav.dim { opacity: .55; }
.pdftxt { font: 700 5.500px "Liberation Sans", sans-serif; fill: #fff; text-anchor: middle; }
.tname { width: 110px; margin-left: 11px; font-size: 12px; color: #3a3a3a; white-space: nowrap; -webkit-mask-image: linear-gradient(to right, #000 85%, transparent); mask-image: linear-gradient(to right, #000 85%, transparent); flex: none; }
.x { width: 12px; height: 12px; margin-left: 2px; flex: none; fill: none; stroke: #222; stroke-width: 1.200; }
.winctl { margin-left: auto; display: flex; }
.wbtn { width: 46px; height: 32px; display: flex; align-items: center; justify-content: center; }

/* address */
.addr { height: 37px; background: #f7f7f7; display: flex; align-items: center; flex: none; }
.pill { width: 949px; height: 30px; background: #fff; border-radius: 15px; display: flex; align-items: center; flex: none; }
.file { width: 20px; font-size: 13px; color: #555; }
.psep { width: 1px; height: 18px; background: #999; flex: none; }
.url { font-size: 13px; color: #1f1f1f; white-space: nowrap; letter-spacing: .02px; }
.pillend { margin-left: auto; padding-right: 15px; display: flex; gap: 20px; }

/* body */
.body { height: 651px; display: flex; flex: none; }
.viewer { width: 1319px; height: 647px; margin-left: 3px; background: #fff; border-radius: 8px; overflow: hidden; display: flex; flex: none; box-shadow: 0 0 2px rgba(0,0,0,.2); }
.docpane { width: 1303px; display: flex; flex-direction: column; flex: none; }
.pdfbar { height: 42px; background: #f7f7f7; border-bottom: 1px solid #ccc; display: flex; align-items: center; flex: none; }
.bsep { width: 1px; height: 20px; background: #c8c8c8; flex: none; }
.lbl { font-size: 13px; color: #222; white-space: nowrap; flex: none; }
.lbl.off { color: #a8a8a8; }
.lbl.small { font-size: 12px; }
.w20 { width: 20px; } .w32 { width: 32px; } .w34 { width: 34px; } .w69 { width: 69px; } .w70 { width: 70px; }
.pagebox { width: 40px; height: 32px; border: 1px solid #c6c6c6; border-radius: 2px; background: #fff; font-size: 12px; display: flex; align-items: center; justify-content: center; flex: none; }
.pushr { margin-left: auto; }
.pdfbar .pushr { margin-left: 186px; }
.infobar { height: 37px; background: #f7f7f7; border-bottom: 1px solid #c4c4c4; display: flex; align-items: center; flex: none; }
.infotxt { font-size: 13px; color: #333; white-space: nowrap; letter-spacing: .07px; }
.infotxt b { color: #1a7cc7; font-weight: 600; margin-left: 1px; }
.m-x { margin-right: 9px; }

.content { height: 552px; display: flex; background: linear-gradient(to right, #cfcfcf 1276px, #cfcfcf 1278px, #e4e4e4 1286px); flex: none; }
.page { width: 1276px; height: 552px; background: #fff; position: relative; display: flex; overflow: hidden; flex: none; font-family: Roboto, sans-serif; filter: blur(.4px); }

/* sidebar of the document */
.side { width: 225px; padding-left: 63px; border-right: 1px solid #ececec; flex: none; }
.logo { height: 70px; border-bottom: 1px solid #e4e4e4; position: relative; display: flex; flex-direction: column; align-items: center; }
.logomark { width: 35px; height: 42px; margin-top: 1px; flex: none; }
.logotxt { display: flex; flex-direction: column; align-items: center; margin-top: 5px; color: #0e76bc; line-height: 4.500px; white-space: nowrap; }
.amh { font: 700 5.500px "DejaVu Sans", "Noto Sans", sans-serif; }
.moh { font: 700 3.800px "Liberation Sans", sans-serif; }
.nav { margin-top: -1px; }
.nv { height: 37px; padding-left: 12px; display: flex; align-items: center; position: relative; color: #8a9094; }
.ni { width: 11px; height: 11px; fill: #8a9094; flex: none; }
.nt { width: 120px; margin-left: 9px; font-size: 11.500px; white-space: nowrap; transform: scaleX(.76); transform-origin: left center; color: #8c9297; }
.cv { width: 8px; height: 8px; position: absolute; right: 5px; top: 17px; fill: none; stroke: #c9cdd0; stroke-width: 1; }
.nv.active { height: 32px; margin: -5px 0 6px 2px; padding: 3px 0 0 4px; background: #d6d6d6; border-left: 4px solid #0e76bc; border-radius: 3px 0 0 3px; }
.nv.active .ni { width: 12px; height: 12px; fill: #0e76bc; }
.nv.active .nt { color: #0e76bc; font-size: 13.500px; font-weight: 500; transform: scaleX(.8); }

/* main of the document */
.main { width: 879px; display: flex; flex-direction: column; flex: none; }
.top { height: 30px; display: flex; align-items: center; padding: 0 0 10px 15px; flex: none; }
.burger { width: 11px; height: 9px; fill: none; stroke: #222; stroke-width: 1.400; flex: none; }
.sys { width: 290px; margin-left: 5px; font-size: 12.500px; font-weight: 500; color: #222; white-space: nowrap; transform: scaleX(.76); transform-origin: left center; flex: none; }
.topright { margin-left: 429px; display: flex; align-items: center; }
.bell { position: relative; width: 12px; height: 12px; display: block; flex: none; }
.bellsvg { width: 12px; height: 12px; fill: #111; display: block; }
.belln { position: absolute; left: 3px; top: -4px; width: 8px; height: 8px; border-radius: 50%; background: #d9333f; color: #fff; font-size: 6px; line-height: 8px; text-align: center; font-weight: 700; }
.usr { width: 9px; height: 10px; margin-left: 21px; fill: #111; flex: none; }
.mail { margin-left: 2px; width: 56px; font-size: 7.500px; color: #222; white-space: nowrap; letter-spacing: -.18px; flex: none; }
.ucv { width: 8px; height: 8px; margin-left: 2px; fill: none; stroke: #222; stroke-width: 1.200; }
.band { height: 43px; background: #0e76bc; display: flex; align-items: center; padding-left: 14px; flex: none; }
.bandt { color: #fff; font-size: 12.500px; font-weight: 700; transform: scaleX(.77); transform-origin: left center; white-space: nowrap; }
.area { flex: 1; background: #eff3f8; padding: 11px 3px 0 10px; min-height: 0; }
.card { height: 500px; background: #fff; border-radius: 7px 7px 0 0; padding: 17px 0 0 15px; }
.tabs { width: 832px; height: 32px; display: flex; border-bottom: 1px solid #e8e8e8; }
.ct { height: 31px; width: 87px; padding: 11px 0 0 23px; font-size: 7.800px; color: #8a8a8a; white-space: nowrap; }
.ct.act { border-bottom: 2px solid #3f51b5; height: 32px; margin-bottom: -1px; }
.ct + .ct { padding-left: 15px; }
.tw { position: relative; margin: 5px 0 0 7px; width: 822px; }
.prog { position: absolute; left: -3px; top: 0; width: 286px; height: 2px; background: #3f51b5; }
.tbl { width: 822px; border-collapse: collapse; table-layout: fixed; font-size: 7.800px; line-height: 12.800px; color: #6f6f6f; }
.c1 { width: 59px; } .c2 { width: 98px; } .c3 { width: 44px; } .c4 { width: 110px; } .c5 { width: 106px; } .c6 { width: 45px; } .c7 { width: 37px; }
.c8 { width: 29px; } .c9 { width: 56px; } .c10 { width: 56px; } .c11 { width: 49px; } .c12 { width: 36px; } .c13 { width: 44px; } .c14 { width: 53px; }
.tbl thead tr { height: 35px; background: #cad4e2; }
.tbl th { padding: 5px 11px 0 0; font-weight: 400; font-size: 6.800px; color: #7d8590; text-align: center; line-height: 12.800px; }
.tbl th.l { text-align: left; padding-right: 0; }
.tbl th.f { padding-left: 13px; }
.tbl th.wide { white-space: nowrap; padding-right: 9px; }
.tbl td { padding: 2px 0 0; vertical-align: middle; }
.tbl td.f { padding-left: 15px; }
.tbl tbody tr { height: 32px; }
.tbl tbody tr.first { height: 35px; }
.tbl tbody tr.first td { padding-top: 5px; }
.tbl tbody tr.tall { height: 39px; }
.tbl tbody tr.tall2 { height: 38px; }
.eq { color: #0f8ad4; font-weight: 700; font-size: 7.800px; letter-spacing: -.12px; }
.st { display: flex; align-items: center; width: 56px; min-height: 26px; margin-top: -2px; padding: 2px; border-radius: 2px; color: #fff; font-weight: 700; font-size: 8px; line-height: 12.800px; letter-spacing: -.12px; }
.ok { background: #008000; border: 1px solid #5fae5f; }
.dec { background: #ee9393; border: 1px solid #f5c0c0; }
.bad { background: #ec2a2a; border: 1px solid #f59a9a; min-height: 32px; }
.dots { color: #111; font: 700 8px/8px "Liberation Sans", sans-serif; position: relative; top: -3px; padding-left: 2px; }
.pend { display: inline-block; width: 37px; height: 22px; line-height: 21px; margin-top: -2px; background: #ff9538; border-radius: 3px; color: #fff; font-weight: 700; font-size: 8.400px; text-align: center; letter-spacing: -.1px; vertical-align: middle; }
.pager { display: flex; align-items: center; height: 16px; margin: 19px 0 0 631px; color: #a5a5a5; font-size: 6.800px; white-space: nowrap; }
.pl { width: 50px; }
.psel { width: 31px; height: 16px; display: flex; align-items: center; justify-content: space-between; padding: 0 2px 0 0; color: #6f6f6f; font-size: 7.500px; border-bottom: 1px solid #c4c4c4; }
.caret { width: 0; height: 0; border: 3px solid transparent; border-top: 3px solid #666; border-bottom: 0; }
.pr { margin-left: 19px; width: 56px; }
.pg { width: 10px; height: 10px; fill: none; stroke: #555; stroke-width: 1.300; margin-left: 4px; flex: none; }
.pg.nx { margin-left: 12px; }

/* overlays */
.marks { position: absolute; left: 0; top: 0; width: 1276px; height: 552px; pointer-events: none; }
.num { font: 700 10px "DejaVu Sans", sans-serif; fill: #fff; text-anchor: middle; }
.menubox { position: absolute; left: 1021px; top: 194px; width: 76px; height: 113px; border: 2px solid #0e76bc; padding: 2px 3px 3px 3px; background: #fff; }
.menu { height: 100%; display: flex; flex-direction: column; border-radius: 3px; box-shadow: 0 1px 4px rgba(0,0,0,.35); padding: 15px 0 0 8px; font-size: 7.600px; color: #777; gap: 18.500px; line-height: 12px; white-space: nowrap; }

/* scrollbars */
.hscroll { height: 16px; position: relative; display: flex; align-items: center; background: #fff; flex: none; }
.hthumb { width: 1135px; height: 9px; background: #8a8a8a; border-radius: 5px; margin-left: 146px; }
.arr { width: 0; height: 0; border: 5px solid transparent; position: absolute; }
.al { left: 4px; border-right-color: #8a8a8a; border-left: 0; }
.ar { left: 1287px; border-left-color: #8a8a8a; border-right: 0; }
.vscroll { width: 16px; position: relative; background: #fff; flex: none; }
.au { left: 3px; top: 8px; border-bottom-color: #8a8a8a; border-top: 0; }
.ad { left: 3px; top: 616px; border-top-color: #8a8a8a; border-bottom: 0; }
.vthumb { position: absolute; left: 3px; top: 449px; width: 10px; height: 18px; background: #8a8a8a; border-radius: 5px; }

/* rail */
.rail { width: 41px; margin-left: 3px; padding: 13px 0 12px 8px; display: flex; flex-direction: column; gap: 20px; flex: none; }
.railsep { width: 28px; height: 1px; background: #c8c8c8; margin: 2px 0 2px -4px; flex: none; }
.railgear { margin-top: auto; }

/* taskbar */
.taskbar { height: 48px; flex: none; border-top: 1px solid #c5cad4; background: linear-gradient(100deg, #e6f0fa 0%, #dbe7f8 30%, #d4ddf5 55%, #dde6f7 75%, #e3ecf8 100%); display: flex; align-items: center; font-size: 11.500px; }
.wx { width: 40px; display: flex; flex-direction: column; line-height: 15.500px; color: #222; }
.wxs { color: #555; }
.tsearch { width: 217px; height: 26px; background: #f2f6fd; border-radius: 13px; display: flex; align-items: center; padding-left: 9px; box-shadow: 0 1px 1px rgba(0,0,0,.25); position: relative; flex: none; }
.st-l { margin-left: 7px; font-size: 12.500px; color: #555; }
.pang { position: absolute; right: 0; top: 0; width: 46px; height: 26px; }
.tk { width: 38px; height: 38px; display: flex; align-items: center; justify-content: center; position: relative; flex: none; border-radius: 4px; }
.tk.sel { background: rgba(255,255,255,.6); }
.tk.sel::after { content: ""; position: absolute; left: 11px; bottom: 0; width: 16px; height: 3px; background: #0f6cbd; border-radius: 2px; }
.tk.pip::after { content: ""; position: absolute; left: 16px; bottom: 0; width: 6px; height: 3px; background: #777; border-radius: 2px; }
.cnt { position: absolute; left: 19px; top: 3px; width: 16px; height: 11px; background: #ee4040; border-radius: 2px; color: #fff; font-size: 8px; line-height: 11px; text-align: center; }
.clock { width: 66px; display: flex; flex-direction: column; align-items: flex-end; font-size: 11.500px; line-height: 17px; color: #222; }
.cop { position: relative; width: 24px; height: 24px; flex: none; }
.pre { position: absolute; left: 5px; bottom: -4px; width: 18px; height: 9px; background: #ffc400; border-radius: 2px; font-size: 6.500px; font-weight: 700; line-height: 9px; text-align: center; color: #222; }
```
